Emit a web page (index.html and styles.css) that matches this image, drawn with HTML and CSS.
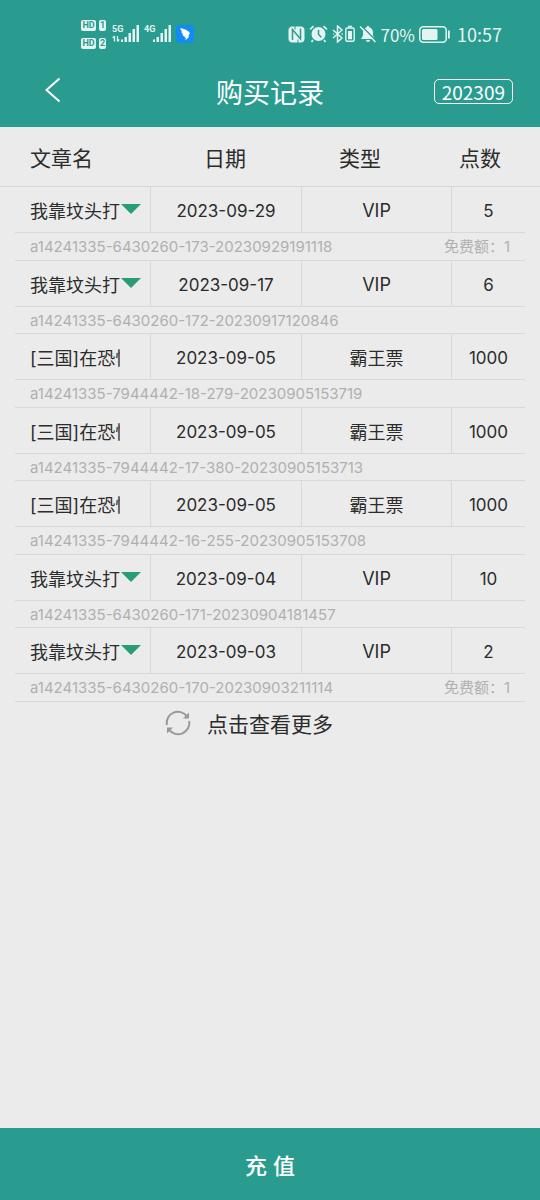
FILE: index.html
```html
<!DOCTYPE html>
<html lang="zh-CN">
<head>
<meta charset="utf-8">
<meta name="viewport" content="width=device-width, initial-scale=1">
<title>购买记录</title>
<link rel="stylesheet" href="styles.css">
</head>
<body>
<header class="top">
  <div class="status">
    <div class="status-left">
      <div class="sims">
        <div class="sim"><span class="tag">HD</span><span class="tag tag-num">1</span></div>
        <div class="sim"><span class="tag">HD</span><span class="tag tag-num">2</span></div>
      </div>
      <svg class="signal" width="28" height="20" viewBox="0 0 28 20" aria-hidden="true">
        <text class="net" x="0" y="8">5G</text>
        <path d="M2.500 12v5.500M.8 14l1.700-2M5.500 12v5.500M5.500 17.500l1.700-2" stroke="#e4f5f1" stroke-width="1.300" fill="none"/>
        <path d="M9 15.500h2V18H9zM12.500 13H15v5h-2.500zM16.500 9H19v9h-2.500zM20.500 5H23v13h-2.500zM24.500 1H27v17h-2.500z" fill="#e4f5f1"/>
      </svg>
      <svg class="signal" width="28" height="20" viewBox="0 0 28 20" aria-hidden="true">
        <text class="net" x="0" y="8">4G</text>
        <path d="M9 15.500h2V18H9zM12.500 13H15v5h-2.500zM16.500 9H19v9h-2.500zM20.500 5H23v13h-2.500zM24.500 1H27v17h-2.500z" fill="#e4f5f1"/>
      </svg>
      <svg width="18" height="18" viewBox="0 0 18 18" aria-hidden="true">
        <rect width="18" height="18" rx="4" fill="#138bf5"/>
        <path d="M4.500 3C8 4 12 5.500 13.300 7c.7.900.3 1.900-.2 2.800l-1 1.600h1.400L9.300 15.500l.7-2.700H8.500l.5-1.300c-1.500-.3-2.400-1-2.700-2l1.300.1C6 8.600 5.300 7.600 5.300 6.600l1.200.4C5 5.800 4.400 4.600 4.500 3z" fill="#fff"/>
      </svg>
    </div>
    <div class="status-right">
      <svg width="17" height="17" viewBox="0 0 17 17" aria-hidden="true">
        <rect x="0.500" y="0.500" width="16" height="16" rx="4" fill="#e4f5f1"/>
        <path d="M4.500 14V3.500l8 9.500V2.500" stroke="#299c8f" stroke-width="1.500" fill="none"/>
        <path d="M7 0v3.500M10 17v-3.500" stroke="#299c8f" stroke-width="1"/>
      </svg>
      <svg width="19" height="18" viewBox="0 0 19 18" aria-hidden="true">
        <circle cx="9.500" cy="9" r="7" fill="#e4f5f1"/>
        <path d="M1 4.500L4.500 1.200M18 4.500l-3.500-3.300M4 15l-1.500 2M15 15l1.500 2" stroke="#e4f5f1" stroke-width="1.700"/>
        <path d="M9.500 5v4.500l2.800 2.800" stroke="#299c8f" stroke-width="1.500" fill="none"/>
      </svg>
      <svg width="23" height="18" viewBox="0 0 23 18" aria-hidden="true">
        <path d="M1 5l9 8-4.500 4V1L10 5l-9 8" stroke="#e4f5f1" stroke-width="1.500" fill="none"/>
        <path d="M1 9h.8M9.500 9h1.300" stroke="#e4f5f1" stroke-width="1.500"/>
        <rect x="13.800" y="3" width="8.400" height="13.200" rx="1.500" stroke="#e4f5f1" stroke-width="1.400" fill="none"/>
        <path d="M16 .8h4v1.400h-4zM16 6h4v8.200h-4z" fill="#e4f5f1"/>
      </svg>
      <svg width="18" height="18" viewBox="0 0 18 18" aria-hidden="true">
        <path d="M9 1c.8 0 1.300.5 1.300 1.300C12.700 3 14 4.900 14 7.500v3l2 3.500H2l2-3.500v-3C4 4.900 5.300 3 7.700 2.300 7.700 1.500 8.200 1 9 1zM7 15h4c0 1.200-.9 2-2 2s-2-.8-2-2z" fill="#e4f5f1"/>
        <path d="M2.200.8l15 15" stroke="#299c8f" stroke-width="1.500"/>
        <path d="M1 1.500l15.500 15.500" stroke="#e4f5f1" stroke-width="1.500"/>
      </svg>
      <span class="pct">70%</span>
      <svg width="32" height="17" viewBox="0 0 32 17" aria-hidden="true">
        <rect x="0.800" y="0.800" width="26.400" height="15.400" rx="3.500" stroke="#e4f5f1" stroke-width="1.500" fill="none"/>
        <rect x="3" y="3" width="15.500" height="11" rx="1.500" fill="#e4f5f1"/>
        <path d="M29 4.500h1.800v8H29z" fill="#e4f5f1"/>
      </svg>
      <span class="clock">10:57</span>
    </div>
  </div>
  <div class="nav">
    <button class="back" type="button" aria-label="返回">
      <svg width="16" height="26" viewBox="0 0 16 26" aria-hidden="true"><path d="M14.500 1.500L1.500 13l13 11.500" stroke="#fff" stroke-width="2" fill="none"/></svg>
    </button>
    <h1 class="title">购买记录</h1>
    <button class="month" type="button">202309</button>
  </div>
</header>

<main class="content">
  <table class="records">
    <thead class="records-head">
      <tr class="head-row"><th class="head-name">文章名</th><th>日期</th><th>类型</th><th>点数</th></tr>
    </thead>
    <tbody class="record">
      <tr class="main-row"><td class="name"><span class="name-text">我靠坟头打</span><span class="caret"></span></td><td class="num">2023-09-29</td><td>VIP</td><td class="num">5</td></tr>
      <tr class="sub-row"><td class="order" colspan="4"><span>a14241335-6430260-173-20230929191118</span><span>免费额：1</span></td></tr>
    </tbody>
    <tbody class="record">
      <tr class="main-row"><td class="name"><span class="name-text">我靠坟头打</span><span class="caret"></span></td><td class="num">2023-09-17</td><td>VIP</td><td class="num">6</td></tr>
      <tr class="sub-row"><td class="order" colspan="4"><span>a14241335-6430260-172-20230917120846</span></td></tr>
    </tbody>
    <tbody class="record">
      <tr class="main-row"><td class="name"><span class="name-text">[三国]在恐怖</span></td><td class="num">2023-09-05</td><td>霸王票</td><td class="num">1000</td></tr>
      <tr class="sub-row"><td class="order" colspan="4"><span>a14241335-7944442-18-279-20230905153719</span></td></tr>
    </tbody>
    <tbody class="record">
      <tr class="main-row"><td class="name"><span class="name-text">[三国]在恐怖</span></td><td class="num">2023-09-05</td><td>霸王票</td><td class="num">1000</td></tr>
      <tr class="sub-row"><td class="order" colspan="4"><span>a14241335-7944442-17-380-20230905153713</span></td></tr>
    </tbody>
    <tbody class="record">
      <tr class="main-row"><td class="name"><span class="name-text">[三国]在恐怖</span></td><td class="num">2023-09-05</td><td>霸王票</td><td class="num">1000</td></tr>
      <tr class="sub-row"><td class="order" colspan="4"><span>a14241335-7944442-16-255-20230905153708</span></td></tr>
    </tbody>
    <tbody class="record">
      <tr class="main-row"><td class="name"><span class="name-text">我靠坟头打</span><span class="caret"></span></td><td class="num">2023-09-04</td><td>VIP</td><td class="num">10</td></tr>
      <tr class="sub-row"><td class="order" colspan="4"><span>a14241335-6430260-171-20230904181457</span></td></tr>
    </tbody>
    <tbody class="record">
      <tr class="main-row"><td class="name"><span class="name-text">我靠坟头打</span><span class="caret"></span></td><td class="num">2023-09-03</td><td>VIP</td><td class="num">2</td></tr>
      <tr class="sub-row"><td class="order" colspan="4"><span>a14241335-6430260-170-20230903211114</span><span>免费额：1</span></td></tr>
    </tbody>
  </table>
  <button class="more" type="button">
    <svg width="26" height="26" viewBox="0 0 26 26" aria-hidden="true">
      <path d="M1.800 15A11.300 11.300 0 0 1 22 6.300M24.200 11A11.300 11.300 0 0 1 4 19.700" stroke="#999" stroke-width="2" fill="none"/>
      <path d="M24 2.500v6h-6zM2 23.500v-6h6z" fill="#999"/>
    </svg>
    <span>点击查看更多</span>
  </button>
</main>

<button class="recharge" type="button">充 值</button>
</body>
</html>
```

FILE: styles.css
```css
* {
  box-sizing: border-box;
}

body {
  margin: 0;
  min-height: 100vh;
  display: flex;
  flex-direction: column;
  background: #ebebeb;
  color: #2c2c2c;
  font-family: Inter, "Noto Sans CJK SC", sans-serif;
}

button {
  border: 0;
  padding: 0;
  background: none;
  color: inherit;
  font-family: inherit;
  cursor: pointer;
}

svg {
  display: block;
  flex: none;
}

.top {
  background: #299c8f;
  color: #fff;
}

.status {
  display: flex;
  justify-content: space-between;
  height: 56px;
  padding: 10px 38px 0 81px;
  color: #e4f5f1;
}

.status-left,
.status-right {
  display: flex;
  align-items: center;
  height: 48px;
}

.status-left {
  gap: 4px;
}

.status-right {
  gap: 4px;
  font-family: "Noto Sans CJK SC", sans-serif;
  font-size: 18px;
}

.sims {
  display: flex;
  flex-direction: column;
  gap: 7px;
  margin-right: 2px;
}

.sim {
  display: flex;
  gap: 3px;
}

.tag {
  width: 15px;
  height: 11px;
  border-radius: 2px;
  background: #e4f5f1;
  color: #299c8f;
  font: bold 9px/11px Roboto, sans-serif;
  text-align: center;
}

.tag-num {
  width: 7px;
}

.net {
  font: bold 9px Roboto, sans-serif;
  fill: #e4f5f1;
}

.pct {
  font-size: 17px;
}

.clock {
  margin-left: 2px;
}

.nav {
  display: grid;
  grid-template-columns: 1fr auto 1fr;
  align-items: center;
  height: 71px;
  padding: 0 27px;
}

.back {
  justify-self: start;
  padding: 0 18px 4px;
}

.title {
  margin: 0;
  padding-top: 4px;
  font-size: 27px;
  line-height: 40px;
  font-weight: 400;
}

.month {
  justify-self: end;
  height: 25px;
  padding: 0 7px;
  border: 1px solid #fff;
  border-radius: 5px;
  font-family: "Noto Sans CJK SC", sans-serif;
  font-size: 19px;
  line-height: 23px;
}

.content {
  flex: 1;
}

.records,
.records-head,
.record {
  display: block;
}

.records-head {
  border-bottom: 1px solid #d8d8d8;
}

.head-row {
  display: grid;
  grid-template-columns: 150fr 150fr 120fr 120fr;
  align-items: center;
  height: 59px;
}

.head-row th {
  padding: 0;
  font-size: 21px;
  font-weight: 400;
}

.head-row .head-name {
  padding-left: 30px;
  text-align: left;
}

.record {
  margin: 0 15px;
}

.main-row {
  display: grid;
  grid-template-columns: 136fr 151fr 150fr 73fr;
  height: 46px;
  border-bottom: 1px solid #d8d8d8;
}

.main-row td {
  display: flex;
  align-items: center;
  justify-content: center;
  min-width: 0;
  padding: 1px 0 0;
  border-right: 1px solid #d8d8d8;
  font-size: 18px;
}

.main-row td:last-child {
  border-right: 0;
}

.main-row .num {
  padding-top: 3px;
}

.main-row .name {
  justify-content: flex-start;
  padding-left: 15px;
}

.name-text {
  width: 90px;
  overflow: hidden;
  white-space: nowrap;
}

.caret {
  margin: 0 0 3px 1px;
  border: 10px solid transparent;
  border-top-color: #299c76;
  border-bottom: 0;
}

.sub-row {
  display: block;
  height: 28px;
  border-bottom: 1px solid #d8d8d8;
}

.record:nth-of-type(even) .sub-row {
  height: 27px;
}

.order {
  display: flex;
  justify-content: space-between;
  align-items: center;
  height: 100%;
  padding: 1px 15px 0;
  color: #b0b0b0;
  font-size: 15px;
  line-height: 20px;
}

.main-row .num {
  font-size: 17px;
}

.more {
  display: flex;
  align-items: center;
  gap: 16px;
  width: max-content;
  height: 42px;
  margin: 0 auto;
  padding-right: 42px;
  font-size: 21px;
}

.recharge {
  width: 100%;
  height: 72px;
  background: #299c8f;
  color: #fff;
  font-size: 22px;
  font-weight: 500;
}
```
